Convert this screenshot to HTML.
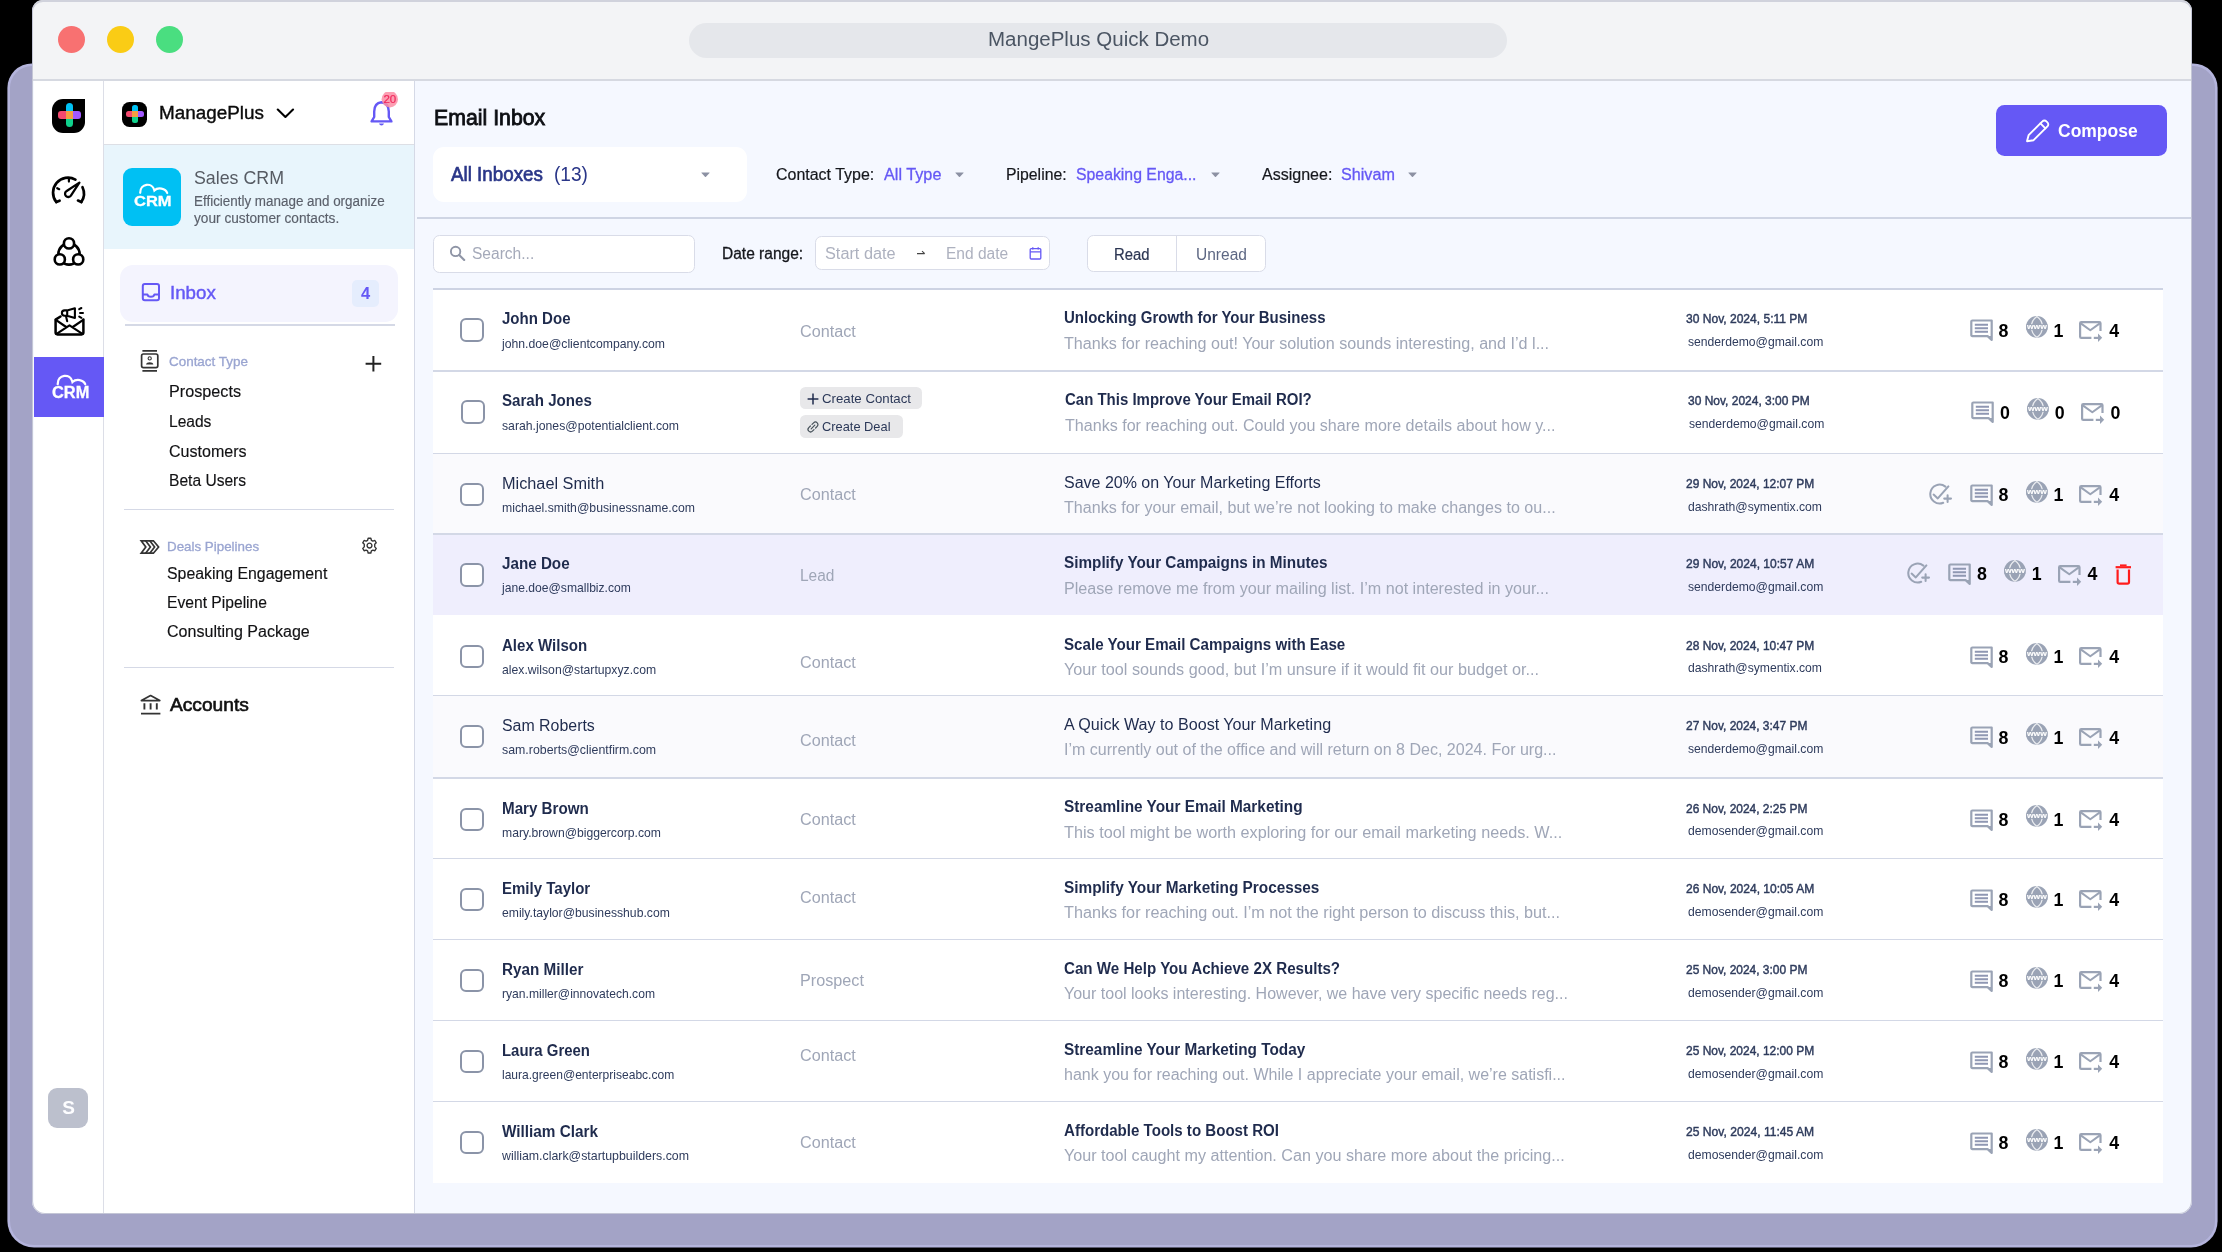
<!DOCTYPE html>
<html><head><meta charset="utf-8"><title>MangePlus Quick Demo</title>
<style>
html,body{margin:0;padding:0;}
body{width:2222px;height:1252px;background:#000;overflow:hidden;position:relative;font-family:"Liberation Sans", sans-serif;}
.b{position:absolute;display:block;}
.t{position:absolute;white-space:pre;line-height:1;font-family:"Liberation Sans", sans-serif;transform-origin:0 50%;}
#win{position:absolute;left:0;top:0;width:2222px;height:1252px;will-change:transform;clip-path:inset(0px 30px 38px 32px round 11px 11px 13px 13px);}
</style></head>
<body>
<div class="b" style="left:10.00px;top:66.00px;width:2204.50px;height:1178.50px;background:#a3a3c6;border-radius:22px 22px 24px 24px;box-shadow:0 0 0 2.6px #b4b4dc;"></div>
<div id="win">
<div class="b" style="left:32.00px;top:0.00px;width:2160.00px;height:1214.00px;background:#f5f8ff;"></div>
<div class="b" style="left:32.00px;top:0.00px;width:2160.00px;height:80.00px;background:#f3f4f6;"></div>
<div class="b" style="left:32.00px;top:79.30px;width:2160.00px;height:1.60px;background:#d6d9e1;"></div>
<div class="b" style="left:58.40px;top:26.30px;width:26.60px;height:26.60px;background:#f87171;border-radius:14px;"></div>
<div class="b" style="left:107.30px;top:26.30px;width:26.60px;height:26.60px;background:#facc15;border-radius:14px;"></div>
<div class="b" style="left:156.40px;top:26.30px;width:26.60px;height:26.60px;background:#4ade80;border-radius:14px;"></div>
<div class="b" style="left:689.00px;top:22.70px;width:818.00px;height:35.30px;background:#e5e7eb;border-radius:18px;"></div>
<span id="t0" class="t" style="left:987.80px;top:29.00px;font-size:20px;color:#4b5563;transform:scaleX(1.0252);">MangePlus Quick Demo</span>
<div class="b" style="left:34.00px;top:80.50px;width:69.50px;height:1134.00px;background:#ffffff;"></div>
<div class="b" style="left:103.00px;top:80.50px;width:1.40px;height:1134.00px;background:#dcdee7;"></div>
<div class="b" style="left:52.40px;top:99.00px;width:32.80px;height:33.60px;background:#000;border-radius:11px 0 11px 11px;"></div>
<div class="b" style="left:65.50px;top:103.00px;width:7.70px;height:8.60px;background:#00c2f5;border-radius:3.5px 3.5px 0 0;"></div>
<div class="b" style="left:65.50px;top:118.40px;width:7.70px;height:8.50px;background:#0fd28c;border-radius:0 0 3.5px 3.5px;"></div>
<div class="b" style="left:57.90px;top:111.00px;width:8.00px;height:7.60px;background:#f4496f;border-radius:3px 0 0 3px;"></div>
<div class="b" style="left:73.00px;top:111.00px;width:8.00px;height:7.60px;background:#a259ff;border-radius:0 3px 3px 0;"></div>
<div class="b" style="left:65.50px;top:111.00px;width:7.70px;height:7.60px;background:#f59e42;"></div>
<svg class="b" style="left:48.00px;top:172.00px;" width="42" height="36" viewBox="48 172 42 36">
<g fill="none" stroke="#000" stroke-width="2.7" stroke-linecap="round" stroke-linejoin="round">
<path d="M56.3 202 A15 15 0 0 1 75.4 179.6"/>
<path d="M82.5 187.2 A15 15 0 0 1 81.3 202"/>
<path d="M56.3 202 L59.6 200.7"/><path d="M81.3 202 L78 200.6"/>
<path d="M57.2 188.2 L59.2 189.2" stroke-width="2.2"/><path d="M68.9 178.8 L68.9 181.6" stroke-width="2.2"/>
<path d="M79.4 182.6 L66.7 191 A3.2 3.2 0 1 0 70.9 195.6 Z" stroke-width="2.3"/>
</g></svg>
<svg class="b" style="left:48.00px;top:232.00px;" width="42" height="40" viewBox="48 232 42 40">
<g fill="none" stroke="#000" stroke-width="2.6">
<circle cx="69" cy="254" r="10.6"/>
<circle cx="69" cy="243.4" r="5.1" fill="#fff"/>
<circle cx="59.8" cy="259.4" r="5.1" fill="#fff"/>
<circle cx="78.2" cy="259.4" r="5.1" fill="#fff"/>
</g></svg>
<svg class="b" style="left:48.00px;top:302.00px;" width="42" height="40" viewBox="48 302 42 40">
<g fill="none" stroke="#000" stroke-width="2.5" stroke-linecap="round" stroke-linejoin="round">
<path d="M60.5 316.5 L55.6 319.6 L55.6 332.6 Q55.6 334.4 57.4 334.4 L81.6 334.4 Q83.4 334.4 83.4 332.6 L83.4 319.6"/>
<path d="M55.8 319.8 L66.2 327 M83.2 319.8 L72.8 327 M56.6 333.8 L69.5 325.4 L82.4 333.8" stroke-width="2.2"/>
<path d="M74.9 308.2 L74.9 318 L67 315.8 L64.6 315.8 A2.7 2.7 0 0 1 64.6 310.4 L67 310.4 Z M67.2 310.6 L67.2 315.6 M66 316.2 L67.2 321.2" stroke-width="2.1"/>
<path d="M79.2 309.2 L81.4 308 M80 313 L83 313 M79.2 316.6 L81.4 317.8" stroke-width="2"/>
</g></svg>
<div class="b" style="left:34.00px;top:357.00px;width:69.50px;height:60.20px;background:#6558f5;"></div>
<svg class="b" style="left:48.00px;top:370.00px;" width="46" height="34" viewBox="48 370 46 34">
<path d="M57.7 384.2 C57.4 374.2 70.4 372.8 72.5 382 C76.2 378.4 83.6 379.6 85.2 384.2" fill="none" stroke="#fff" stroke-width="2.3" stroke-linecap="round"/></svg>
<span id="t1" class="t" style="left:51.80px;top:385.00px;font-size:16px;color:#fff;font-weight:700;-webkit-text-stroke:0.3px #fff;transform:scaleX(1.0237);">CRM</span>
<div class="b" style="left:48.40px;top:1087.80px;width:40.00px;height:40.60px;background:#bcc0cd;border-radius:9px;"></div>
<span id="t2" class="t" style="left:68.50px;top:1098.00px;font-size:19px;color:#fdfdff;font-weight:700;transform:translateX(-50%);">S</span>
<div class="b" style="left:104.40px;top:80.50px;width:310.00px;height:1134.00px;background:#ffffff;"></div>
<div class="b" style="left:414.00px;top:80.50px;width:1.40px;height:1134.00px;background:#d5d9e6;"></div>
<div class="b" style="left:122.30px;top:101.70px;width:25.00px;height:25.20px;background:#000;border-radius:7.5px;"></div>
<div class="b" style="left:132.10px;top:105.20px;width:5.60px;height:6.00px;background:#00c2f5;border-radius:2.5px 2.5px 0 0;"></div>
<div class="b" style="left:132.10px;top:117.20px;width:5.60px;height:6.00px;background:#0fd28c;border-radius:0 0 2.5px 2.5px;"></div>
<div class="b" style="left:126.00px;top:111.20px;width:6.20px;height:5.80px;background:#f4496f;border-radius:2.5px 0 0 2.5px;"></div>
<div class="b" style="left:137.60px;top:111.20px;width:6.20px;height:5.80px;background:#a259ff;border-radius:0 2.5px 2.5px 0;"></div>
<div class="b" style="left:132.10px;top:111.20px;width:5.60px;height:5.80px;background:#f59e42;"></div>
<span id="t3" class="t" style="left:159.40px;top:105.00px;font-size:17.6px;color:#0b0b0b;-webkit-text-stroke:0.35px #0b0b0b;transform:scaleX(1.0725);">ManagePlus</span>
<svg class="b" style="left:274.00px;top:105.00px;" width="24" height="18" viewBox="274 105 24 18"><path d="M277.8 109.6 L285.4 117 L293 109.6" fill="none" stroke="#000" stroke-width="2.1" stroke-linecap="round" stroke-linejoin="round"/></svg>
<svg class="b" style="left:366.00px;top:92.00px;" width="36" height="40" viewBox="366 92 36 40">
<path d="M381.4 102.2 C376 102.8 374.2 107.4 374.2 111.6 L374.2 117 L371.6 121.4 L391.4 121.4 L388.8 117 L388.8 111.6 C388.8 107.4 387 102.8 381.4 102.2 Z" fill="none" stroke="#6558f5" stroke-width="2.4" stroke-linejoin="round"/>
<path d="M379 123.6 A2.6 2.6 0 0 0 384 123.6 Z" fill="#6558f5"/>
<circle cx="389.8" cy="99.2" r="8.2" fill="#fb8da4" fill-opacity="0.85"/></svg>
<span id="t4" class="t" style="left:389.80px;top:94.00px;font-size:11.5px;color:#f0285c;-webkit-text-stroke:0.2px #f0285c;transform:translateX(-50%);">20</span>
<div class="b" style="left:104.40px;top:143.60px;width:310.00px;height:1.50px;background:#dddfe5;"></div>
<div class="b" style="left:104.40px;top:145.00px;width:309.80px;height:103.60px;background:#e8f5fc;"></div>
<div class="b" style="left:122.70px;top:168.20px;width:58.00px;height:57.60px;background:#00c0f3;border-radius:9px;"></div>
<svg class="b" style="left:128.00px;top:178.00px;" width="50" height="34" viewBox="128 178 50 34">
<path d="M140.2 192.8 C140 183.2 152.4 182 154.4 190.4 C157.8 187 165.6 188 167.2 193" fill="none" stroke="#fff" stroke-width="2.2" stroke-linecap="round"/></svg>
<span id="t5" class="t" style="left:133.60px;top:193.00px;font-size:15.4px;color:#fff;font-weight:700;-webkit-text-stroke:0.3px #fff;transform:scaleX(1.0724);">CRM</span>
<span id="t6" class="t" style="left:194.40px;top:169.00px;font-size:18.6px;color:#565b63;transform:scaleX(0.9571);">Sales CRM</span>
<span id="t7" class="t" style="left:194.40px;top:194.00px;font-size:14px;color:#5b606b;-webkit-text-stroke:0.15px #5b606b;transform:scaleX(0.9579);">Efficiently manage and organize</span>
<span id="t8" class="t" style="left:194.40px;top:211.00px;font-size:14px;color:#5b606b;-webkit-text-stroke:0.15px #5b606b;transform:scaleX(0.9770);">your customer contacts.</span>
<div class="b" style="left:119.80px;top:265.00px;width:278.00px;height:57.00px;background:#f4f4fe;border-radius:13px;"></div>
<svg class="b" style="left:139.00px;top:280.00px;" width="24" height="24" viewBox="139 280 24 24">
<g fill="none" stroke="#6558f5" stroke-width="2" stroke-linejoin="round">
<rect x="142.8" y="284" width="16.2" height="16.2" rx="2"/>
<path d="M143 294.4 L147.4 294.4 C148 297.6 153.8 297.6 154.4 294.4 L158.8 294.4"/>
</g></svg>
<span id="t9" class="t" style="left:170.40px;top:283.00px;font-size:19px;color:#6558f5;-webkit-text-stroke:0.45px #6558f5;transform:scaleX(0.9853);">Inbox</span>
<div class="b" style="left:351.90px;top:279.80px;width:27.00px;height:27.00px;background:#e5edfd;border-radius:5px;"></div>
<span id="t10" class="t" style="left:365.50px;top:285.00px;font-size:16.5px;color:#6558f5;font-weight:700;transform:translateX(-50%);">4</span>
<div class="b" style="left:125.20px;top:324.40px;width:270.00px;height:1.50px;background:#d5d9e6;"></div>
<svg class="b" style="left:138.00px;top:347.00px;" width="24" height="28" viewBox="138 347 24 28">
<g fill="none" stroke="#333" stroke-width="1.7">
<path d="M142.4 350.8 L157 350.8 M142.4 370.8 L157 370.8"/>
<rect x="141.6" y="354" width="16.2" height="13.6" rx="1.8"/>
<circle cx="149.7" cy="358.4" r="1.6" stroke-width="1.1"/>
<path d="M146 364.4 C146.4 361.4 153 361.4 153.4 364.4 Z" fill="#333" stroke="none"/>
</g></svg>
<span id="t11" class="t" style="left:169.10px;top:355.00px;font-size:13px;color:#9aa5d1;-webkit-text-stroke:0.3px #9aa5d1;transform:scaleX(1.0331);">Contact Type</span>
<svg class="b" style="left:363.00px;top:354.00px;" width="20" height="20" viewBox="363 354 20 20"><path d="M365.6 363.7 L381.2 363.7 M373.4 356 L373.4 371.5" stroke="#222" stroke-width="2" fill="none"/></svg>
<span id="t12" class="t" style="left:169.20px;top:384.00px;font-size:16px;color:#121214;-webkit-text-stroke:0.15px #121214;transform:scaleX(1.0121);">Prospects</span>
<span id="t13" class="t" style="left:169.20px;top:414.00px;font-size:16px;color:#121214;-webkit-text-stroke:0.15px #121214;transform:scaleX(0.9726);">Leads</span>
<span id="t14" class="t" style="left:169.20px;top:444.00px;font-size:16px;color:#121214;-webkit-text-stroke:0.15px #121214;transform:scaleX(1.0031);">Customers</span>
<span id="t15" class="t" style="left:169.20px;top:473.00px;font-size:16px;color:#121214;-webkit-text-stroke:0.15px #121214;transform:scaleX(0.9742);">Beta Users</span>
<div class="b" style="left:124.00px;top:508.60px;width:270.00px;height:1.50px;background:#d5d9e6;"></div>
<svg class="b" style="left:136.50px;top:537.20px;" width="26" height="20" viewBox="136 537 26 20">
<g fill="none" stroke="#333" stroke-width="1.7" stroke-linejoin="miter">
<path d="M140.2 540.8 L152.4 540.8 L157.6 547 L152.4 553.2 L140.2 553.2 L144.8 547 Z"/>
<path d="M144.6 540.8 L149.4 547 L144.6 553.2 M148.8 540.8 L153.6 547 L148.8 553.2"/>
</g></svg>
<span id="t16" class="t" style="left:167.20px;top:540.00px;font-size:13px;color:#9aa5d1;-webkit-text-stroke:0.3px #9aa5d1;transform:scaleX(1.0278);">Deals Pipelines</span>
<svg class="b" style="left:358.00px;top:534.00px;" width="24" height="24" viewBox="358 534 24 24">
<g transform="translate(369.5 545.6) scale(0.9)">
<path d="M-1.5 -8.2 L1.5 -8.2 L2.1 -5.9 L3.7 -5 L6 -5.7 L7.5 -3.1 L5.8 -1.4 L5.8 1.4 L7.5 3.1 L6 5.7 L3.7 5 L2.1 5.9 L1.5 8.2 L-1.5 8.2 L-2.1 5.9 L-3.7 5 L-6 5.7 L-7.5 3.1 L-5.8 1.4 L-5.8 -1.4 L-7.5 -3.1 L-6 -5.7 L-3.7 -5 L-2.1 -5.9 Z" fill="none" stroke="#333" stroke-width="1.5" stroke-linejoin="round"/>
<circle r="2.7" fill="none" stroke="#333" stroke-width="1.5"/></g></svg>
<span id="t17" class="t" style="left:167.20px;top:566.00px;font-size:16px;color:#121214;-webkit-text-stroke:0.15px #121214;transform:scaleX(0.9901);">Speaking Engagement</span>
<span id="t18" class="t" style="left:167.20px;top:595.00px;font-size:16px;color:#121214;-webkit-text-stroke:0.15px #121214;transform:scaleX(0.9775);">Event Pipeline</span>
<span id="t19" class="t" style="left:167.20px;top:624.00px;font-size:16px;color:#121214;-webkit-text-stroke:0.15px #121214;transform:scaleX(1.0034);">Consulting Package</span>
<div class="b" style="left:124.00px;top:666.80px;width:270.00px;height:1.50px;background:#d5d9e6;"></div>
<svg class="b" style="left:138.00px;top:692.00px;" width="26" height="26" viewBox="138 692 26 26">
<g fill="none" stroke="#333" stroke-width="1.7">
<path d="M141.4 700.6 L150.6 695.6 L159.8 700.6 Z" stroke-linejoin="round"/>
<path d="M144.4 703.2 L144.4 709.6 M150.6 703.2 L150.6 709.6 M156.8 703.2 L156.8 709.6 M141 713.6 L160.4 713.6" stroke-width="1.9"/>
</g></svg>
<span id="t20" class="t" style="left:170.10px;top:697.00px;font-size:17.6px;color:#111;-webkit-text-stroke:0.6px #111;transform:scaleX(1.0888);">Accounts</span>
<span id="t21" class="t" style="left:433.50px;top:107.00px;font-size:22px;color:#0d0f14;-webkit-text-stroke:0.85px #0d0f14;transform:scaleX(0.9674);">Email Inbox</span>
<div class="b" style="left:1996.30px;top:105.00px;width:170.80px;height:50.80px;background:#6558f5;border-radius:8.5px;"></div>
<svg class="b" style="left:2022.00px;top:115.00px;" width="32" height="32" viewBox="2022 115 32 32">
<g fill="none" stroke="#fff" stroke-width="1.9" stroke-linejoin="round" stroke-linecap="round">
<path d="M2027 141.2 L2028.6 135.2 L2042.4 121.4 A2.7 2.7 0 0 1 2046.4 121.4 L2047.4 122.4 A2.7 2.7 0 0 1 2047.4 126.4 L2033.6 140.2 Z"/>
<path d="M2040.4 123.4 L2045.4 128.4"/>
</g></svg>
<span id="t22" class="t" style="left:2057.60px;top:123.00px;font-size:17.6px;color:#fff;font-weight:700;transform:scaleX(0.9941);">Compose</span>
<div class="b" style="left:433.00px;top:147.00px;width:314.00px;height:55.00px;background:#ffffff;border-radius:11px;"></div>
<span id="t23" class="t" style="left:450.50px;top:164.00px;font-size:20px;color:#2a3688;-webkit-text-stroke:0.65px #2a3688;transform:scaleX(0.9393);">All Inboxes</span>
<span id="t24" class="t" style="left:554.00px;top:164.00px;font-size:20px;color:#2a3688;transform:scaleX(0.9528);">(13)</span>
<svg class="b" style="left:701.20px;top:172.40px;" width="9" height="5.4" viewBox="0 0 10.4 6"><path d="M0.9 0.4 L9.5 0.4 Q10.4 0.4 9.8 1.1 L5.8 5.3 Q5.2 5.9 4.6 5.3 L0.6 1.1 Q0 0.4 0.9 0.4 Z" fill="#8c91a3"/></svg>
<span id="t25" class="t" style="left:775.70px;top:167.00px;font-size:16px;color:#15171c;-webkit-text-stroke:0.2px #15171c;transform:scaleX(0.9976);">Contact Type:</span>
<span id="t26" class="t" style="left:883.50px;top:167.00px;font-size:16px;color:#6558f5;-webkit-text-stroke:0.3px #6558f5;transform:scaleX(1.0137);">All Type</span>
<svg class="b" style="left:955.00px;top:172.40px;" width="9" height="5.4" viewBox="0 0 10.4 6"><path d="M0.9 0.4 L9.5 0.4 Q10.4 0.4 9.8 1.1 L5.8 5.3 Q5.2 5.9 4.6 5.3 L0.6 1.1 Q0 0.4 0.9 0.4 Z" fill="#8c91a3"/></svg>
<span id="t27" class="t" style="left:1006.20px;top:167.00px;font-size:16px;color:#15171c;-webkit-text-stroke:0.2px #15171c;transform:scaleX(0.9874);">Pipeline:</span>
<span id="t28" class="t" style="left:1075.90px;top:167.00px;font-size:16px;color:#6558f5;-webkit-text-stroke:0.3px #6558f5;transform:scaleX(0.9887);">Speaking Enga...</span>
<svg class="b" style="left:1210.60px;top:172.40px;" width="9" height="5.4" viewBox="0 0 10.4 6"><path d="M0.9 0.4 L9.5 0.4 Q10.4 0.4 9.8 1.1 L5.8 5.3 Q5.2 5.9 4.6 5.3 L0.6 1.1 Q0 0.4 0.9 0.4 Z" fill="#8c91a3"/></svg>
<span id="t29" class="t" style="left:1262.00px;top:167.00px;font-size:16px;color:#15171c;-webkit-text-stroke:0.2px #15171c;transform:scaleX(1.0019);">Assignee:</span>
<span id="t30" class="t" style="left:1341.00px;top:167.00px;font-size:16px;color:#6558f5;-webkit-text-stroke:0.3px #6558f5;transform:scaleX(1.0101);">Shivam</span>
<svg class="b" style="left:1408.40px;top:172.40px;" width="9" height="5.4" viewBox="0 0 10.4 6"><path d="M0.9 0.4 L9.5 0.4 Q10.4 0.4 9.8 1.1 L5.8 5.3 Q5.2 5.9 4.6 5.3 L0.6 1.1 Q0 0.4 0.9 0.4 Z" fill="#8c91a3"/></svg>
<div class="b" style="left:416.80px;top:217.00px;width:1776.00px;height:1.50px;background:#cfd5e4;"></div>
<div class="b" style="left:433.00px;top:234.80px;width:262.20px;height:38.00px;background:#ffffff;border-radius:6.5px;border:1.3px solid #d9dce8;box-sizing:border-box;"></div>
<svg class="b" style="left:448.00px;top:244.00px;" width="20" height="20" viewBox="448 244 20 20"><circle cx="455.6" cy="251.4" r="4.7" fill="none" stroke="#8f95a6" stroke-width="1.9"/><path d="M459.2 255 L464.2 260" stroke="#8f95a6" stroke-width="2.1" stroke-linecap="round"/></svg>
<span id="t31" class="t" style="left:472.00px;top:246.00px;font-size:16px;color:#a4a9b9;transform:scaleX(0.9714);">Search...</span>
<span id="t32" class="t" style="left:722.00px;top:246.00px;font-size:16px;color:#15171c;-webkit-text-stroke:0.3px #15171c;transform:scaleX(0.9700);">Date range:</span>
<div class="b" style="left:814.60px;top:236.00px;width:235.20px;height:34.00px;background:#ffffff;border-radius:6.5px;border:1.3px solid #d9dce8;box-sizing:border-box;"></div>
<span id="t33" class="t" style="left:825.00px;top:246.00px;font-size:16px;color:#adb1bf;transform:scaleX(1.0177);">Start date</span>
<svg class="b" style="left:915.00px;top:248.00px;" width="14" height="10" viewBox="915 248 14 10"><path d="M917 253.6 L924.6 253.6 M922 251.2 L924.8 253.6" stroke="#444" stroke-width="1.1" fill="none"/></svg>
<span id="t34" class="t" style="left:945.50px;top:246.00px;font-size:16px;color:#adb1bf;transform:scaleX(0.9709);">End date</span>
<svg class="b" style="left:1028.00px;top:246.00px;" width="16" height="16" viewBox="1028 246 16 16"><g fill="none" stroke="#6558f5" stroke-width="1.3">
<rect x="1030.2" y="248.6" width="10.6" height="10.4" rx="1"/><path d="M1030.2 251.8 L1040.8 251.8 M1032.8 247.2 L1032.8 249.6 M1038.2 247.2 L1038.2 249.6"/></g></svg>
<div class="b" style="left:1087.20px;top:235.20px;width:179.20px;height:37.20px;background:#ffffff;border-radius:6.5px;border:1.3px solid #d9dce8;box-sizing:border-box;"></div>
<div class="b" style="left:1175.70px;top:235.80px;width:1.30px;height:36.00px;background:#d9dce8;"></div>
<span id="t35" class="t" style="left:1114.20px;top:247.00px;font-size:16px;color:#2b3552;-webkit-text-stroke:0.2px #2b3552;transform:scaleX(0.9281);">Read</span>
<span id="t36" class="t" style="left:1196.00px;top:247.00px;font-size:16px;color:#5d6783;transform:scaleX(0.9698);">Unread</span>
<div class="b" style="left:432.70px;top:288.80px;width:1730.70px;height:894.00px;background:#ffffff;"></div>
<div class="b" style="left:460.10px;top:318.20px;width:23.80px;height:23.60px;background:#ffffff;border-radius:6px;border:2.2px solid #8b94a8;box-sizing:border-box;"></div>
<span id="t37" class="t" style="left:501.90px;top:311.00px;font-size:16px;color:#1f2b4d;font-weight:700;transform:scaleX(0.9398);">John Doe</span>
<span id="t38" class="t" style="left:501.90px;top:338.00px;font-size:12.8px;color:#2e3b5c;transform:scaleX(0.9550);">john.doe@clientcompany.com</span>
<span id="t39" class="t" style="left:799.60px;top:324.00px;font-size:16px;color:#9fa6b7;transform:scaleX(1.0120);">Contact</span>
<span id="t40" class="t" style="left:1063.80px;top:310.00px;font-size:16px;color:#1f2b4d;font-weight:700;transform:scaleX(0.9388);">Unlocking Growth for Your Business</span>
<span id="t41" class="t" style="left:1063.80px;top:336.00px;font-size:16px;color:#9fa6b7;transform:scaleX(1.0081);">Thanks for reaching out! Your solution sounds interesting, and I’d l...</span>
<span id="t42" class="t" style="left:1686.40px;top:312.00px;font-size:13px;color:#2e3b5c;-webkit-text-stroke:0.45px #2e3b5c;transform:scaleX(0.9264);">30 Nov, 2024, 5:11 PM</span>
<span id="t43" class="t" style="left:1687.70px;top:336.00px;font-size:12.8px;color:#2e3b5c;transform:scaleX(0.9498);">senderdemo@gmail.com</span>
<svg class="b" style="left:1970.00px;top:319.20px;" width="24" height="23" viewBox="0 0 24 23">
<path d="M2.4 1.5 L21.7 1.5 L21.7 21 L17.6 17.1 L2.4 17.1 Q1.3 17.1 1.3 16 L1.3 2.6 Q1.3 1.5 2.4 1.5 Z" fill="none" stroke="#9aa3b5" stroke-width="2.2" stroke-linejoin="round"/>
<path d="M17.8 17 L21.8 20.8 L21.8 17 Z" fill="#9aa3b5"/>
<path d="M4.8 5.7 L18 5.7 M4.8 9.3 L18 9.3 M4.8 12.7 L18 12.7" stroke="#8f97b2" stroke-width="1.9" fill="none"/></svg>
<span id="t44" class="t" style="left:1998.60px;top:323.00px;font-size:17.8px;color:#000;font-weight:700;">8</span>
<svg class="b" style="left:2025.60px;top:316.10px;" width="22" height="22" viewBox="0 0 22 22">
<circle cx="10.9" cy="10.9" r="10.85" fill="#9aa3b5"/>
<path d="M10.9 0.6 C3.6 5.4 3.6 16.4 10.9 21.2 M10.9 0.6 C18.2 5.4 18.2 16.4 10.9 21.2" fill="none" stroke="#fff" stroke-opacity="0.8" stroke-width="1.25" />
<rect x="0.4" y="8.2" width="21" height="5.6" fill="#9aa3b5"/>
<text x="10.9" y="13.1" font-family='"Liberation Sans",sans-serif' font-size="7.6" font-weight="700" fill="#fff" stroke="#fff" stroke-width="0.12" text-anchor="middle" textLength="19.8" lengthAdjust="spacingAndGlyphs">www</text></svg>
<span id="t45" class="t" style="left:2053.40px;top:323.00px;font-size:17.8px;color:#000;font-weight:700;">1</span>
<svg class="b" style="left:2079.40px;top:320.90px;" width="25" height="22" viewBox="0 0 25 22">
<g fill="none" stroke="#9aa3b5" stroke-width="2.2" stroke-linejoin="round">
<path d="M12.4 16.9 L2.3 16.9 Q1.1 16.9 1.1 15.7 L1.1 2.3 Q1.1 1.1 2.3 1.1 L20.3 1.1 Q21.5 1.1 21.5 2.3 L21.5 9.9"/>
<path d="M1.8 2.4 L11.3 9.3 L20.8 2.4" stroke-width="2"/>
<path d="M14.8 16.9 L19.6 16.9"/>
</g><path d="M19 12.6 L23.2 16.8 L19 21 Z" fill="#9aa3b5"/></svg>
<span id="t46" class="t" style="left:2109.20px;top:323.00px;font-size:17.8px;color:#000;font-weight:700;">4</span>
<div class="b" style="left:461.08px;top:400.20px;width:23.80px;height:23.60px;background:#ffffff;border-radius:6px;border:2.2px solid #8b94a8;box-sizing:border-box;"></div>
<span id="t47" class="t" style="left:501.90px;top:393.00px;font-size:16px;color:#1f2b4d;font-weight:700;transform:scaleX(0.9437);">Sarah Jones</span>
<span id="t48" class="t" style="left:501.90px;top:420.00px;font-size:12.8px;color:#2e3b5c;transform:scaleX(0.9560);">sarah.jones@potentialclient.com</span>
<div class="b" style="left:799.50px;top:386.50px;width:122.30px;height:22.60px;background:#e8e8ea;border-radius:5.5px;"></div>
<svg class="b" style="left:805.50px;top:391.50px;" width="14" height="14" viewBox="0 0 14 14"><path d="M1.6 7 L12.4 7 M7 1.6 L7 12.4" stroke="#1f2b4d" stroke-width="1.5" fill="none"/></svg>
<span id="t49" class="t" style="left:822.10px;top:392.00px;font-size:13.2px;color:#2b3858;transform:scaleX(1.0033);">Create Contact</span>
<div class="b" style="left:799.50px;top:414.80px;width:103.40px;height:23.00px;background:#e8e8ea;border-radius:5.5px;"></div>
<svg class="b" style="left:805.50px;top:419.70px;" width="14" height="14" viewBox="0 0 14 14"><g fill="none" stroke="#46515a" stroke-width="1.2" stroke-linecap="round">
<path d="M6 4.4 L7.6 2.8 A2.5 2.5 0 0 1 11.2 6.4 L9.6 8"/><path d="M8 9.6 L6.4 11.2 A2.5 2.5 0 0 1 2.8 7.6 L4.4 6"/><path d="M5.2 8.8 L8.8 5.2"/></g></svg>
<span id="t50" class="t" style="left:822.10px;top:420.00px;font-size:13.2px;color:#2b3858;transform:scaleX(0.9734);">Create Deal</span>
<span id="t51" class="t" style="left:1065.20px;top:392.00px;font-size:16px;color:#1f2b4d;font-weight:700;transform:scaleX(0.9364);">Can This Improve Your Email ROI?</span>
<span id="t52" class="t" style="left:1065.20px;top:418.00px;font-size:16px;color:#9fa6b7;transform:scaleX(1.0052);">Thanks for reaching out. Could you share more details about how y...</span>
<span id="t53" class="t" style="left:1687.80px;top:394.00px;font-size:13px;color:#2e3b5c;-webkit-text-stroke:0.45px #2e3b5c;transform:scaleX(0.9219);">30 Nov, 2024, 3:00 PM</span>
<span id="t54" class="t" style="left:1689.10px;top:418.00px;font-size:12.8px;color:#2e3b5c;transform:scaleX(0.9498);">senderdemo@gmail.com</span>
<svg class="b" style="left:1971.40px;top:401.20px;" width="24" height="23" viewBox="0 0 24 23">
<path d="M2.4 1.5 L21.7 1.5 L21.7 21 L17.6 17.1 L2.4 17.1 Q1.3 17.1 1.3 16 L1.3 2.6 Q1.3 1.5 2.4 1.5 Z" fill="none" stroke="#9aa3b5" stroke-width="2.2" stroke-linejoin="round"/>
<path d="M17.8 17 L21.8 20.8 L21.8 17 Z" fill="#9aa3b5"/>
<path d="M4.8 5.7 L18 5.7 M4.8 9.3 L18 9.3 M4.8 12.7 L18 12.7" stroke="#8f97b2" stroke-width="1.9" fill="none"/></svg>
<span id="t55" class="t" style="left:2000.00px;top:405.00px;font-size:17.8px;color:#000;font-weight:700;">0</span>
<svg class="b" style="left:2027.00px;top:398.10px;" width="22" height="22" viewBox="0 0 22 22">
<circle cx="10.9" cy="10.9" r="10.85" fill="#9aa3b5"/>
<path d="M10.9 0.6 C3.6 5.4 3.6 16.4 10.9 21.2 M10.9 0.6 C18.2 5.4 18.2 16.4 10.9 21.2" fill="none" stroke="#fff" stroke-opacity="0.8" stroke-width="1.25" />
<rect x="0.4" y="8.2" width="21" height="5.6" fill="#9aa3b5"/>
<text x="10.9" y="13.1" font-family='"Liberation Sans",sans-serif' font-size="7.6" font-weight="700" fill="#fff" stroke="#fff" stroke-width="0.12" text-anchor="middle" textLength="19.8" lengthAdjust="spacingAndGlyphs">www</text></svg>
<span id="t56" class="t" style="left:2054.80px;top:405.00px;font-size:17.8px;color:#000;font-weight:700;">0</span>
<svg class="b" style="left:2080.80px;top:402.90px;" width="25" height="22" viewBox="0 0 25 22">
<g fill="none" stroke="#9aa3b5" stroke-width="2.2" stroke-linejoin="round">
<path d="M12.4 16.9 L2.3 16.9 Q1.1 16.9 1.1 15.7 L1.1 2.3 Q1.1 1.1 2.3 1.1 L20.3 1.1 Q21.5 1.1 21.5 2.3 L21.5 9.9"/>
<path d="M1.8 2.4 L11.3 9.3 L20.8 2.4" stroke-width="2"/>
<path d="M14.8 16.9 L19.6 16.9"/>
</g><path d="M19 12.6 L23.2 16.8 L19 21 Z" fill="#9aa3b5"/></svg>
<span id="t57" class="t" style="left:2110.60px;top:405.00px;font-size:17.8px;color:#000;font-weight:700;">0</span>
<div class="b" style="left:432.70px;top:453.30px;width:1730.70px;height:80.50px;background:#fafafd;"></div>
<div class="b" style="left:460.10px;top:482.70px;width:23.80px;height:23.60px;background:#ffffff;border-radius:6px;border:2.2px solid #8b94a8;box-sizing:border-box;"></div>
<span id="t58" class="t" style="left:501.90px;top:476.00px;font-size:16px;color:#1f2b4d;transform:scaleX(1.0171);">Michael Smith</span>
<span id="t59" class="t" style="left:501.90px;top:502.00px;font-size:12.8px;color:#2e3b5c;transform:scaleX(0.9575);">michael.smith@businessname.com</span>
<span id="t60" class="t" style="left:799.60px;top:487.00px;font-size:16px;color:#9fa6b7;transform:scaleX(1.0120);">Contact</span>
<span id="t61" class="t" style="left:1063.80px;top:475.00px;font-size:16px;color:#1f2b4d;transform:scaleX(0.9998);">Save 20% on Your Marketing Efforts</span>
<span id="t62" class="t" style="left:1063.80px;top:500.00px;font-size:16px;color:#9fa6b7;transform:scaleX(1.0050);">Thanks for your email, but we’re not looking to make changes to ou...</span>
<span id="t63" class="t" style="left:1686.40px;top:477.00px;font-size:13px;color:#2e3b5c;-webkit-text-stroke:0.45px #2e3b5c;transform:scaleX(0.9206);">29 Nov, 2024, 12:07 PM</span>
<span id="t64" class="t" style="left:1687.70px;top:501.00px;font-size:12.8px;color:#2e3b5c;transform:scaleX(0.9502);">dashrath@symentix.com</span>
<svg class="b" style="left:1970.00px;top:483.70px;" width="24" height="23" viewBox="0 0 24 23">
<path d="M2.4 1.5 L21.7 1.5 L21.7 21 L17.6 17.1 L2.4 17.1 Q1.3 17.1 1.3 16 L1.3 2.6 Q1.3 1.5 2.4 1.5 Z" fill="none" stroke="#9aa3b5" stroke-width="2.2" stroke-linejoin="round"/>
<path d="M17.8 17 L21.8 20.8 L21.8 17 Z" fill="#9aa3b5"/>
<path d="M4.8 5.7 L18 5.7 M4.8 9.3 L18 9.3 M4.8 12.7 L18 12.7" stroke="#8f97b2" stroke-width="1.9" fill="none"/></svg>
<span id="t65" class="t" style="left:1998.60px;top:487.00px;font-size:17.8px;color:#000;font-weight:700;">8</span>
<svg class="b" style="left:2025.60px;top:480.60px;" width="22" height="22" viewBox="0 0 22 22">
<circle cx="10.9" cy="10.9" r="10.85" fill="#9aa3b5"/>
<path d="M10.9 0.6 C3.6 5.4 3.6 16.4 10.9 21.2 M10.9 0.6 C18.2 5.4 18.2 16.4 10.9 21.2" fill="none" stroke="#fff" stroke-opacity="0.8" stroke-width="1.25" />
<rect x="0.4" y="8.2" width="21" height="5.6" fill="#9aa3b5"/>
<text x="10.9" y="13.1" font-family='"Liberation Sans",sans-serif' font-size="7.6" font-weight="700" fill="#fff" stroke="#fff" stroke-width="0.12" text-anchor="middle" textLength="19.8" lengthAdjust="spacingAndGlyphs">www</text></svg>
<span id="t66" class="t" style="left:2053.40px;top:487.00px;font-size:17.8px;color:#000;font-weight:700;">1</span>
<svg class="b" style="left:2079.40px;top:485.40px;" width="25" height="22" viewBox="0 0 25 22">
<g fill="none" stroke="#9aa3b5" stroke-width="2.2" stroke-linejoin="round">
<path d="M12.4 16.9 L2.3 16.9 Q1.1 16.9 1.1 15.7 L1.1 2.3 Q1.1 1.1 2.3 1.1 L20.3 1.1 Q21.5 1.1 21.5 2.3 L21.5 9.9"/>
<path d="M1.8 2.4 L11.3 9.3 L20.8 2.4" stroke-width="2"/>
<path d="M14.8 16.9 L19.6 16.9"/>
</g><path d="M19 12.6 L23.2 16.8 L19 21 Z" fill="#9aa3b5"/></svg>
<span id="t67" class="t" style="left:2109.20px;top:487.00px;font-size:17.8px;color:#000;font-weight:700;">4</span>
<svg class="b" style="left:1927.60px;top:482.60px;" width="25" height="23" viewBox="0 0 25 23">
<g fill="none" stroke="#9aa3b5" stroke-width="2.05" stroke-linecap="round" stroke-linejoin="round">
<path d="M17.4 3.6 A9.4 9.4 0 1 0 15.2 19.8"/>
<path d="M5.6 11.6 L9.8 15.4 L20.4 3.4"/>
<path d="M16.2 15.6 L23 15.6 M19.6 12.2 L19.6 19"/>
</g></svg>
<div class="b" style="left:432.70px;top:533.80px;width:1730.70px;height:81.40px;background:#efeefd;"></div>
<div class="b" style="left:460.10px;top:563.20px;width:23.80px;height:23.60px;background:#ffffff;border-radius:6px;border:2.2px solid #8b94a8;box-sizing:border-box;"></div>
<span id="t68" class="t" style="left:501.90px;top:556.00px;font-size:16px;color:#1f2b4d;font-weight:700;transform:scaleX(0.9502);">Jane Doe</span>
<span id="t69" class="t" style="left:501.90px;top:582.00px;font-size:12.8px;color:#2e3b5c;transform:scaleX(0.9475);">jane.doe@smallbiz.com</span>
<span id="t70" class="t" style="left:799.60px;top:568.00px;font-size:16px;color:#9fa6b7;transform:scaleX(0.9665);">Lead</span>
<span id="t71" class="t" style="left:1063.80px;top:555.00px;font-size:16px;color:#1f2b4d;font-weight:700;transform:scaleX(0.9555);">Simplify Your Campaigns in Minutes</span>
<span id="t72" class="t" style="left:1063.80px;top:581.00px;font-size:16px;color:#9fa6b7;transform:scaleX(1.0079);">Please remove me from your mailing list. I’m not interested in your...</span>
<span id="t73" class="t" style="left:1686.40px;top:557.00px;font-size:13px;color:#2e3b5c;-webkit-text-stroke:0.45px #2e3b5c;transform:scaleX(0.9254);">29 Nov, 2024, 10:57 AM</span>
<span id="t74" class="t" style="left:1687.70px;top:581.00px;font-size:12.8px;color:#2e3b5c;transform:scaleX(0.9498);">senderdemo@gmail.com</span>
<svg class="b" style="left:1948.30px;top:562.80px;" width="24" height="23" viewBox="0 0 24 23">
<path d="M2.4 1.5 L21.7 1.5 L21.7 21 L17.6 17.1 L2.4 17.1 Q1.3 17.1 1.3 16 L1.3 2.6 Q1.3 1.5 2.4 1.5 Z" fill="none" stroke="#9aa3b5" stroke-width="2.2" stroke-linejoin="round"/>
<path d="M17.8 17 L21.8 20.8 L21.8 17 Z" fill="#9aa3b5"/>
<path d="M4.8 5.7 L18 5.7 M4.8 9.3 L18 9.3 M4.8 12.7 L18 12.7" stroke="#8f97b2" stroke-width="1.9" fill="none"/></svg>
<span id="t75" class="t" style="left:1976.90px;top:566.00px;font-size:17.8px;color:#000;font-weight:700;">8</span>
<svg class="b" style="left:2003.90px;top:559.70px;" width="22" height="22" viewBox="0 0 22 22">
<circle cx="10.9" cy="10.9" r="10.85" fill="#9aa3b5"/>
<path d="M10.9 0.6 C3.6 5.4 3.6 16.4 10.9 21.2 M10.9 0.6 C18.2 5.4 18.2 16.4 10.9 21.2" fill="none" stroke="#fff" stroke-opacity="0.8" stroke-width="1.25" />
<rect x="0.4" y="8.2" width="21" height="5.6" fill="#9aa3b5"/>
<text x="10.9" y="13.1" font-family='"Liberation Sans",sans-serif' font-size="7.6" font-weight="700" fill="#fff" stroke="#fff" stroke-width="0.12" text-anchor="middle" textLength="19.8" lengthAdjust="spacingAndGlyphs">www</text></svg>
<span id="t76" class="t" style="left:2031.70px;top:566.00px;font-size:17.8px;color:#000;font-weight:700;">1</span>
<svg class="b" style="left:2057.70px;top:564.50px;" width="25" height="22" viewBox="0 0 25 22">
<g fill="none" stroke="#9aa3b5" stroke-width="2.2" stroke-linejoin="round">
<path d="M12.4 16.9 L2.3 16.9 Q1.1 16.9 1.1 15.7 L1.1 2.3 Q1.1 1.1 2.3 1.1 L20.3 1.1 Q21.5 1.1 21.5 2.3 L21.5 9.9"/>
<path d="M1.8 2.4 L11.3 9.3 L20.8 2.4" stroke-width="2"/>
<path d="M14.8 16.9 L19.6 16.9"/>
</g><path d="M19 12.6 L23.2 16.8 L19 21 Z" fill="#9aa3b5"/></svg>
<span id="t77" class="t" style="left:2087.50px;top:566.00px;font-size:17.8px;color:#000;font-weight:700;">4</span>
<svg class="b" style="left:1906.40px;top:562.00px;" width="25" height="23" viewBox="0 0 25 23">
<g fill="none" stroke="#9aa3b5" stroke-width="2.05" stroke-linecap="round" stroke-linejoin="round">
<path d="M17.4 3.6 A9.4 9.4 0 1 0 15.2 19.8"/>
<path d="M5.6 11.6 L9.8 15.4 L20.4 3.4"/>
<path d="M16.2 15.6 L23 15.6 M19.6 12.2 L19.6 19"/>
</g></svg>
<svg class="b" style="left:2115.40px;top:564.20px;" width="17" height="21" viewBox="0 0 17 21">
<g fill="none" stroke="#ff1c1c" stroke-width="2.2" stroke-linejoin="round">
<path d="M0.6 3.2 L16 3.2"/><path d="M5 1.2 L11.6 1.2" stroke-width="1.6"/>
<path d="M2.6 5.4 L2.6 18 Q2.6 19.6 4.2 19.6 L12.4 19.6 Q14 19.6 14 18 L14 5.4"/>
</g></svg>
<div class="b" style="left:460.10px;top:644.60px;width:23.80px;height:23.60px;background:#ffffff;border-radius:6px;border:2.2px solid #8b94a8;box-sizing:border-box;"></div>
<span id="t78" class="t" style="left:501.90px;top:638.00px;font-size:16px;color:#1f2b4d;font-weight:700;transform:scaleX(0.9409);">Alex Wilson</span>
<span id="t79" class="t" style="left:501.90px;top:664.00px;font-size:12.8px;color:#2e3b5c;transform:scaleX(0.9533);">alex.wilson@startupxyz.com</span>
<span id="t80" class="t" style="left:799.60px;top:655.00px;font-size:16px;color:#9fa6b7;transform:scaleX(1.0120);">Contact</span>
<span id="t81" class="t" style="left:1063.80px;top:637.00px;font-size:16px;color:#1f2b4d;font-weight:700;transform:scaleX(0.9459);">Scale Your Email Campaigns with Ease</span>
<span id="t82" class="t" style="left:1063.80px;top:662.00px;font-size:16px;color:#9fa6b7;transform:scaleX(1.0129);">Your tool sounds good, but I’m unsure if it would fit our budget or...</span>
<span id="t83" class="t" style="left:1686.40px;top:639.00px;font-size:13px;color:#2e3b5c;-webkit-text-stroke:0.45px #2e3b5c;transform:scaleX(0.9206);">28 Nov, 2024, 10:47 PM</span>
<span id="t84" class="t" style="left:1687.70px;top:662.00px;font-size:12.8px;color:#2e3b5c;transform:scaleX(0.9502);">dashrath@symentix.com</span>
<svg class="b" style="left:1970.00px;top:645.60px;" width="24" height="23" viewBox="0 0 24 23">
<path d="M2.4 1.5 L21.7 1.5 L21.7 21 L17.6 17.1 L2.4 17.1 Q1.3 17.1 1.3 16 L1.3 2.6 Q1.3 1.5 2.4 1.5 Z" fill="none" stroke="#9aa3b5" stroke-width="2.2" stroke-linejoin="round"/>
<path d="M17.8 17 L21.8 20.8 L21.8 17 Z" fill="#9aa3b5"/>
<path d="M4.8 5.7 L18 5.7 M4.8 9.3 L18 9.3 M4.8 12.7 L18 12.7" stroke="#8f97b2" stroke-width="1.9" fill="none"/></svg>
<span id="t85" class="t" style="left:1998.60px;top:649.00px;font-size:17.8px;color:#000;font-weight:700;">8</span>
<svg class="b" style="left:2025.60px;top:642.50px;" width="22" height="22" viewBox="0 0 22 22">
<circle cx="10.9" cy="10.9" r="10.85" fill="#9aa3b5"/>
<path d="M10.9 0.6 C3.6 5.4 3.6 16.4 10.9 21.2 M10.9 0.6 C18.2 5.4 18.2 16.4 10.9 21.2" fill="none" stroke="#fff" stroke-opacity="0.8" stroke-width="1.25" />
<rect x="0.4" y="8.2" width="21" height="5.6" fill="#9aa3b5"/>
<text x="10.9" y="13.1" font-family='"Liberation Sans",sans-serif' font-size="7.6" font-weight="700" fill="#fff" stroke="#fff" stroke-width="0.12" text-anchor="middle" textLength="19.8" lengthAdjust="spacingAndGlyphs">www</text></svg>
<span id="t86" class="t" style="left:2053.40px;top:649.00px;font-size:17.8px;color:#000;font-weight:700;">1</span>
<svg class="b" style="left:2079.40px;top:647.30px;" width="25" height="22" viewBox="0 0 25 22">
<g fill="none" stroke="#9aa3b5" stroke-width="2.2" stroke-linejoin="round">
<path d="M12.4 16.9 L2.3 16.9 Q1.1 16.9 1.1 15.7 L1.1 2.3 Q1.1 1.1 2.3 1.1 L20.3 1.1 Q21.5 1.1 21.5 2.3 L21.5 9.9"/>
<path d="M1.8 2.4 L11.3 9.3 L20.8 2.4" stroke-width="2"/>
<path d="M14.8 16.9 L19.6 16.9"/>
</g><path d="M19 12.6 L23.2 16.8 L19 21 Z" fill="#9aa3b5"/></svg>
<span id="t87" class="t" style="left:2109.20px;top:649.00px;font-size:17.8px;color:#000;font-weight:700;">4</span>
<div class="b" style="left:432.70px;top:695.50px;width:1730.70px;height:82.60px;background:#fafafd;"></div>
<div class="b" style="left:460.10px;top:724.90px;width:23.80px;height:23.60px;background:#ffffff;border-radius:6px;border:2.2px solid #8b94a8;box-sizing:border-box;"></div>
<span id="t88" class="t" style="left:501.90px;top:718.00px;font-size:16px;color:#1f2b4d;transform:scaleX(0.9938);">Sam Roberts</span>
<span id="t89" class="t" style="left:501.90px;top:744.00px;font-size:12.8px;color:#2e3b5c;transform:scaleX(0.9662);">sam.roberts@clientfirm.com</span>
<span id="t90" class="t" style="left:799.60px;top:733.00px;font-size:16px;color:#9fa6b7;transform:scaleX(1.0120);">Contact</span>
<span id="t91" class="t" style="left:1063.80px;top:717.00px;font-size:16px;color:#1f2b4d;transform:scaleX(1.0067);">A Quick Way to Boost Your Marketing</span>
<span id="t92" class="t" style="left:1063.80px;top:742.00px;font-size:16px;color:#9fa6b7;transform:scaleX(1.0020);">I’m currently out of the office and will return on 8 Dec, 2024. For urg...</span>
<span id="t93" class="t" style="left:1686.40px;top:719.00px;font-size:13px;color:#2e3b5c;-webkit-text-stroke:0.45px #2e3b5c;transform:scaleX(0.9196);">27 Nov, 2024, 3:47 PM</span>
<span id="t94" class="t" style="left:1687.70px;top:743.00px;font-size:12.8px;color:#2e3b5c;transform:scaleX(0.9498);">senderdemo@gmail.com</span>
<svg class="b" style="left:1970.00px;top:725.90px;" width="24" height="23" viewBox="0 0 24 23">
<path d="M2.4 1.5 L21.7 1.5 L21.7 21 L17.6 17.1 L2.4 17.1 Q1.3 17.1 1.3 16 L1.3 2.6 Q1.3 1.5 2.4 1.5 Z" fill="none" stroke="#9aa3b5" stroke-width="2.2" stroke-linejoin="round"/>
<path d="M17.8 17 L21.8 20.8 L21.8 17 Z" fill="#9aa3b5"/>
<path d="M4.8 5.7 L18 5.7 M4.8 9.3 L18 9.3 M4.8 12.7 L18 12.7" stroke="#8f97b2" stroke-width="1.9" fill="none"/></svg>
<span id="t95" class="t" style="left:1998.60px;top:730.00px;font-size:17.8px;color:#000;font-weight:700;">8</span>
<svg class="b" style="left:2025.60px;top:722.80px;" width="22" height="22" viewBox="0 0 22 22">
<circle cx="10.9" cy="10.9" r="10.85" fill="#9aa3b5"/>
<path d="M10.9 0.6 C3.6 5.4 3.6 16.4 10.9 21.2 M10.9 0.6 C18.2 5.4 18.2 16.4 10.9 21.2" fill="none" stroke="#fff" stroke-opacity="0.8" stroke-width="1.25" />
<rect x="0.4" y="8.2" width="21" height="5.6" fill="#9aa3b5"/>
<text x="10.9" y="13.1" font-family='"Liberation Sans",sans-serif' font-size="7.6" font-weight="700" fill="#fff" stroke="#fff" stroke-width="0.12" text-anchor="middle" textLength="19.8" lengthAdjust="spacingAndGlyphs">www</text></svg>
<span id="t96" class="t" style="left:2053.40px;top:730.00px;font-size:17.8px;color:#000;font-weight:700;">1</span>
<svg class="b" style="left:2079.40px;top:727.60px;" width="25" height="22" viewBox="0 0 25 22">
<g fill="none" stroke="#9aa3b5" stroke-width="2.2" stroke-linejoin="round">
<path d="M12.4 16.9 L2.3 16.9 Q1.1 16.9 1.1 15.7 L1.1 2.3 Q1.1 1.1 2.3 1.1 L20.3 1.1 Q21.5 1.1 21.5 2.3 L21.5 9.9"/>
<path d="M1.8 2.4 L11.3 9.3 L20.8 2.4" stroke-width="2"/>
<path d="M14.8 16.9 L19.6 16.9"/>
</g><path d="M19 12.6 L23.2 16.8 L19 21 Z" fill="#9aa3b5"/></svg>
<span id="t97" class="t" style="left:2109.20px;top:730.00px;font-size:17.8px;color:#000;font-weight:700;">4</span>
<div class="b" style="left:460.10px;top:807.50px;width:23.80px;height:23.60px;background:#ffffff;border-radius:6px;border:2.2px solid #8b94a8;box-sizing:border-box;"></div>
<span id="t98" class="t" style="left:501.90px;top:801.00px;font-size:16px;color:#1f2b4d;font-weight:700;transform:scaleX(0.9478);">Mary Brown</span>
<span id="t99" class="t" style="left:501.90px;top:827.00px;font-size:12.8px;color:#2e3b5c;transform:scaleX(0.9510);">mary.brown@biggercorp.com</span>
<span id="t100" class="t" style="left:799.60px;top:812.00px;font-size:16px;color:#9fa6b7;transform:scaleX(1.0120);">Contact</span>
<span id="t101" class="t" style="left:1063.80px;top:799.00px;font-size:16px;color:#1f2b4d;font-weight:700;transform:scaleX(0.9606);">Streamline Your Email Marketing</span>
<span id="t102" class="t" style="left:1063.80px;top:825.00px;font-size:16px;color:#9fa6b7;transform:scaleX(1.0131);">This tool might be worth exploring for our email marketing needs. W...</span>
<span id="t103" class="t" style="left:1686.40px;top:802.00px;font-size:13px;color:#2e3b5c;-webkit-text-stroke:0.45px #2e3b5c;transform:scaleX(0.9196);">26 Nov, 2024, 2:25 PM</span>
<span id="t104" class="t" style="left:1687.70px;top:825.00px;font-size:12.8px;color:#2e3b5c;transform:scaleX(0.9498);">demosender@gmail.com</span>
<svg class="b" style="left:1970.00px;top:808.50px;" width="24" height="23" viewBox="0 0 24 23">
<path d="M2.4 1.5 L21.7 1.5 L21.7 21 L17.6 17.1 L2.4 17.1 Q1.3 17.1 1.3 16 L1.3 2.6 Q1.3 1.5 2.4 1.5 Z" fill="none" stroke="#9aa3b5" stroke-width="2.2" stroke-linejoin="round"/>
<path d="M17.8 17 L21.8 20.8 L21.8 17 Z" fill="#9aa3b5"/>
<path d="M4.8 5.7 L18 5.7 M4.8 9.3 L18 9.3 M4.8 12.7 L18 12.7" stroke="#8f97b2" stroke-width="1.9" fill="none"/></svg>
<span id="t105" class="t" style="left:1998.60px;top:812.00px;font-size:17.8px;color:#000;font-weight:700;">8</span>
<svg class="b" style="left:2025.60px;top:805.40px;" width="22" height="22" viewBox="0 0 22 22">
<circle cx="10.9" cy="10.9" r="10.85" fill="#9aa3b5"/>
<path d="M10.9 0.6 C3.6 5.4 3.6 16.4 10.9 21.2 M10.9 0.6 C18.2 5.4 18.2 16.4 10.9 21.2" fill="none" stroke="#fff" stroke-opacity="0.8" stroke-width="1.25" />
<rect x="0.4" y="8.2" width="21" height="5.6" fill="#9aa3b5"/>
<text x="10.9" y="13.1" font-family='"Liberation Sans",sans-serif' font-size="7.6" font-weight="700" fill="#fff" stroke="#fff" stroke-width="0.12" text-anchor="middle" textLength="19.8" lengthAdjust="spacingAndGlyphs">www</text></svg>
<span id="t106" class="t" style="left:2053.40px;top:812.00px;font-size:17.8px;color:#000;font-weight:700;">1</span>
<svg class="b" style="left:2079.40px;top:810.20px;" width="25" height="22" viewBox="0 0 25 22">
<g fill="none" stroke="#9aa3b5" stroke-width="2.2" stroke-linejoin="round">
<path d="M12.4 16.9 L2.3 16.9 Q1.1 16.9 1.1 15.7 L1.1 2.3 Q1.1 1.1 2.3 1.1 L20.3 1.1 Q21.5 1.1 21.5 2.3 L21.5 9.9"/>
<path d="M1.8 2.4 L11.3 9.3 L20.8 2.4" stroke-width="2"/>
<path d="M14.8 16.9 L19.6 16.9"/>
</g><path d="M19 12.6 L23.2 16.8 L19 21 Z" fill="#9aa3b5"/></svg>
<span id="t107" class="t" style="left:2109.20px;top:812.00px;font-size:17.8px;color:#000;font-weight:700;">4</span>
<div class="b" style="left:460.10px;top:887.70px;width:23.80px;height:23.60px;background:#ffffff;border-radius:6px;border:2.2px solid #8b94a8;box-sizing:border-box;"></div>
<span id="t108" class="t" style="left:501.90px;top:881.00px;font-size:16px;color:#1f2b4d;font-weight:700;transform:scaleX(0.9386);">Emily Taylor</span>
<span id="t109" class="t" style="left:501.90px;top:907.00px;font-size:12.8px;color:#2e3b5c;transform:scaleX(0.9516);">emily.taylor@businesshub.com</span>
<span id="t110" class="t" style="left:799.60px;top:890.00px;font-size:16px;color:#9fa6b7;transform:scaleX(1.0120);">Contact</span>
<span id="t111" class="t" style="left:1063.80px;top:880.00px;font-size:16px;color:#1f2b4d;font-weight:700;transform:scaleX(0.9595);">Simplify Your Marketing Processes</span>
<span id="t112" class="t" style="left:1063.80px;top:905.00px;font-size:16px;color:#9fa6b7;transform:scaleX(1.0124);">Thanks for reaching out. I’m not the right person to discuss this, but...</span>
<span id="t113" class="t" style="left:1686.40px;top:882.00px;font-size:13px;color:#2e3b5c;-webkit-text-stroke:0.45px #2e3b5c;transform:scaleX(0.9254);">26 Nov, 2024, 10:05 AM</span>
<span id="t114" class="t" style="left:1687.70px;top:906.00px;font-size:12.8px;color:#2e3b5c;transform:scaleX(0.9498);">demosender@gmail.com</span>
<svg class="b" style="left:1970.00px;top:888.70px;" width="24" height="23" viewBox="0 0 24 23">
<path d="M2.4 1.5 L21.7 1.5 L21.7 21 L17.6 17.1 L2.4 17.1 Q1.3 17.1 1.3 16 L1.3 2.6 Q1.3 1.5 2.4 1.5 Z" fill="none" stroke="#9aa3b5" stroke-width="2.2" stroke-linejoin="round"/>
<path d="M17.8 17 L21.8 20.8 L21.8 17 Z" fill="#9aa3b5"/>
<path d="M4.8 5.7 L18 5.7 M4.8 9.3 L18 9.3 M4.8 12.7 L18 12.7" stroke="#8f97b2" stroke-width="1.9" fill="none"/></svg>
<span id="t115" class="t" style="left:1998.60px;top:892.00px;font-size:17.8px;color:#000;font-weight:700;">8</span>
<svg class="b" style="left:2025.60px;top:885.60px;" width="22" height="22" viewBox="0 0 22 22">
<circle cx="10.9" cy="10.9" r="10.85" fill="#9aa3b5"/>
<path d="M10.9 0.6 C3.6 5.4 3.6 16.4 10.9 21.2 M10.9 0.6 C18.2 5.4 18.2 16.4 10.9 21.2" fill="none" stroke="#fff" stroke-opacity="0.8" stroke-width="1.25" />
<rect x="0.4" y="8.2" width="21" height="5.6" fill="#9aa3b5"/>
<text x="10.9" y="13.1" font-family='"Liberation Sans",sans-serif' font-size="7.6" font-weight="700" fill="#fff" stroke="#fff" stroke-width="0.12" text-anchor="middle" textLength="19.8" lengthAdjust="spacingAndGlyphs">www</text></svg>
<span id="t116" class="t" style="left:2053.40px;top:892.00px;font-size:17.8px;color:#000;font-weight:700;">1</span>
<svg class="b" style="left:2079.40px;top:890.40px;" width="25" height="22" viewBox="0 0 25 22">
<g fill="none" stroke="#9aa3b5" stroke-width="2.2" stroke-linejoin="round">
<path d="M12.4 16.9 L2.3 16.9 Q1.1 16.9 1.1 15.7 L1.1 2.3 Q1.1 1.1 2.3 1.1 L20.3 1.1 Q21.5 1.1 21.5 2.3 L21.5 9.9"/>
<path d="M1.8 2.4 L11.3 9.3 L20.8 2.4" stroke-width="2"/>
<path d="M14.8 16.9 L19.6 16.9"/>
</g><path d="M19 12.6 L23.2 16.8 L19 21 Z" fill="#9aa3b5"/></svg>
<span id="t117" class="t" style="left:2109.20px;top:892.00px;font-size:17.8px;color:#000;font-weight:700;">4</span>
<div class="b" style="left:460.10px;top:968.70px;width:23.80px;height:23.60px;background:#ffffff;border-radius:6px;border:2.2px solid #8b94a8;box-sizing:border-box;"></div>
<span id="t118" class="t" style="left:501.90px;top:962.00px;font-size:16px;color:#1f2b4d;font-weight:700;transform:scaleX(0.9536);">Ryan Miller</span>
<span id="t119" class="t" style="left:501.90px;top:988.00px;font-size:12.8px;color:#2e3b5c;transform:scaleX(0.9465);">ryan.miller@innovatech.com</span>
<span id="t120" class="t" style="left:799.60px;top:973.00px;font-size:16px;color:#9fa6b7;transform:scaleX(1.0120);">Prospect</span>
<span id="t121" class="t" style="left:1063.80px;top:961.00px;font-size:16px;color:#1f2b4d;font-weight:700;transform:scaleX(0.9458);">Can We Help You Achieve 2X Results?</span>
<span id="t122" class="t" style="left:1063.80px;top:986.00px;font-size:16px;color:#9fa6b7;transform:scaleX(1.0005);">Your tool looks interesting. However, we have very specific needs reg...</span>
<span id="t123" class="t" style="left:1686.40px;top:963.00px;font-size:13px;color:#2e3b5c;-webkit-text-stroke:0.45px #2e3b5c;transform:scaleX(0.9196);">25 Nov, 2024, 3:00 PM</span>
<span id="t124" class="t" style="left:1687.70px;top:987.00px;font-size:12.8px;color:#2e3b5c;transform:scaleX(0.9498);">demosender@gmail.com</span>
<svg class="b" style="left:1970.00px;top:969.70px;" width="24" height="23" viewBox="0 0 24 23">
<path d="M2.4 1.5 L21.7 1.5 L21.7 21 L17.6 17.1 L2.4 17.1 Q1.3 17.1 1.3 16 L1.3 2.6 Q1.3 1.5 2.4 1.5 Z" fill="none" stroke="#9aa3b5" stroke-width="2.2" stroke-linejoin="round"/>
<path d="M17.8 17 L21.8 20.8 L21.8 17 Z" fill="#9aa3b5"/>
<path d="M4.8 5.7 L18 5.7 M4.8 9.3 L18 9.3 M4.8 12.7 L18 12.7" stroke="#8f97b2" stroke-width="1.9" fill="none"/></svg>
<span id="t125" class="t" style="left:1998.60px;top:973.00px;font-size:17.8px;color:#000;font-weight:700;">8</span>
<svg class="b" style="left:2025.60px;top:966.60px;" width="22" height="22" viewBox="0 0 22 22">
<circle cx="10.9" cy="10.9" r="10.85" fill="#9aa3b5"/>
<path d="M10.9 0.6 C3.6 5.4 3.6 16.4 10.9 21.2 M10.9 0.6 C18.2 5.4 18.2 16.4 10.9 21.2" fill="none" stroke="#fff" stroke-opacity="0.8" stroke-width="1.25" />
<rect x="0.4" y="8.2" width="21" height="5.6" fill="#9aa3b5"/>
<text x="10.9" y="13.1" font-family='"Liberation Sans",sans-serif' font-size="7.6" font-weight="700" fill="#fff" stroke="#fff" stroke-width="0.12" text-anchor="middle" textLength="19.8" lengthAdjust="spacingAndGlyphs">www</text></svg>
<span id="t126" class="t" style="left:2053.40px;top:973.00px;font-size:17.8px;color:#000;font-weight:700;">1</span>
<svg class="b" style="left:2079.40px;top:971.40px;" width="25" height="22" viewBox="0 0 25 22">
<g fill="none" stroke="#9aa3b5" stroke-width="2.2" stroke-linejoin="round">
<path d="M12.4 16.9 L2.3 16.9 Q1.1 16.9 1.1 15.7 L1.1 2.3 Q1.1 1.1 2.3 1.1 L20.3 1.1 Q21.5 1.1 21.5 2.3 L21.5 9.9"/>
<path d="M1.8 2.4 L11.3 9.3 L20.8 2.4" stroke-width="2"/>
<path d="M14.8 16.9 L19.6 16.9"/>
</g><path d="M19 12.6 L23.2 16.8 L19 21 Z" fill="#9aa3b5"/></svg>
<span id="t127" class="t" style="left:2109.20px;top:973.00px;font-size:17.8px;color:#000;font-weight:700;">4</span>
<div class="b" style="left:460.10px;top:1049.70px;width:23.80px;height:23.60px;background:#ffffff;border-radius:6px;border:2.2px solid #8b94a8;box-sizing:border-box;"></div>
<span id="t128" class="t" style="left:501.90px;top:1043.00px;font-size:16px;color:#1f2b4d;font-weight:700;transform:scaleX(0.9325);">Laura Green</span>
<span id="t129" class="t" style="left:501.90px;top:1069.00px;font-size:12.8px;color:#2e3b5c;transform:scaleX(0.9410);">laura.green@enterpriseabc.com</span>
<span id="t130" class="t" style="left:799.60px;top:1048.00px;font-size:16px;color:#9fa6b7;transform:scaleX(1.0120);">Contact</span>
<span id="t131" class="t" style="left:1063.80px;top:1042.00px;font-size:16px;color:#1f2b4d;font-weight:700;transform:scaleX(0.9590);">Streamline Your Marketing Today</span>
<span id="t132" class="t" style="left:1063.80px;top:1067.00px;font-size:16px;color:#9fa6b7;transform:scaleX(0.9998);">hank you for reaching out. While I appreciate your email, we’re satisfi...</span>
<span id="t133" class="t" style="left:1686.40px;top:1044.00px;font-size:13px;color:#2e3b5c;-webkit-text-stroke:0.45px #2e3b5c;transform:scaleX(0.9206);">25 Nov, 2024, 12:00 PM</span>
<span id="t134" class="t" style="left:1687.70px;top:1068.00px;font-size:12.8px;color:#2e3b5c;transform:scaleX(0.9498);">demosender@gmail.com</span>
<svg class="b" style="left:1970.00px;top:1050.70px;" width="24" height="23" viewBox="0 0 24 23">
<path d="M2.4 1.5 L21.7 1.5 L21.7 21 L17.6 17.1 L2.4 17.1 Q1.3 17.1 1.3 16 L1.3 2.6 Q1.3 1.5 2.4 1.5 Z" fill="none" stroke="#9aa3b5" stroke-width="2.2" stroke-linejoin="round"/>
<path d="M17.8 17 L21.8 20.8 L21.8 17 Z" fill="#9aa3b5"/>
<path d="M4.8 5.7 L18 5.7 M4.8 9.3 L18 9.3 M4.8 12.7 L18 12.7" stroke="#8f97b2" stroke-width="1.9" fill="none"/></svg>
<span id="t135" class="t" style="left:1998.60px;top:1054.00px;font-size:17.8px;color:#000;font-weight:700;">8</span>
<svg class="b" style="left:2025.60px;top:1047.60px;" width="22" height="22" viewBox="0 0 22 22">
<circle cx="10.9" cy="10.9" r="10.85" fill="#9aa3b5"/>
<path d="M10.9 0.6 C3.6 5.4 3.6 16.4 10.9 21.2 M10.9 0.6 C18.2 5.4 18.2 16.4 10.9 21.2" fill="none" stroke="#fff" stroke-opacity="0.8" stroke-width="1.25" />
<rect x="0.4" y="8.2" width="21" height="5.6" fill="#9aa3b5"/>
<text x="10.9" y="13.1" font-family='"Liberation Sans",sans-serif' font-size="7.6" font-weight="700" fill="#fff" stroke="#fff" stroke-width="0.12" text-anchor="middle" textLength="19.8" lengthAdjust="spacingAndGlyphs">www</text></svg>
<span id="t136" class="t" style="left:2053.40px;top:1054.00px;font-size:17.8px;color:#000;font-weight:700;">1</span>
<svg class="b" style="left:2079.40px;top:1052.40px;" width="25" height="22" viewBox="0 0 25 22">
<g fill="none" stroke="#9aa3b5" stroke-width="2.2" stroke-linejoin="round">
<path d="M12.4 16.9 L2.3 16.9 Q1.1 16.9 1.1 15.7 L1.1 2.3 Q1.1 1.1 2.3 1.1 L20.3 1.1 Q21.5 1.1 21.5 2.3 L21.5 9.9"/>
<path d="M1.8 2.4 L11.3 9.3 L20.8 2.4" stroke-width="2"/>
<path d="M14.8 16.9 L19.6 16.9"/>
</g><path d="M19 12.6 L23.2 16.8 L19 21 Z" fill="#9aa3b5"/></svg>
<span id="t137" class="t" style="left:2109.20px;top:1054.00px;font-size:17.8px;color:#000;font-weight:700;">4</span>
<div class="b" style="left:460.10px;top:1130.70px;width:23.80px;height:23.60px;background:#ffffff;border-radius:6px;border:2.2px solid #8b94a8;box-sizing:border-box;"></div>
<span id="t138" class="t" style="left:501.90px;top:1124.00px;font-size:16px;color:#1f2b4d;font-weight:700;transform:scaleX(0.9567);">William Clark</span>
<span id="t139" class="t" style="left:501.90px;top:1150.00px;font-size:12.8px;color:#2e3b5c;transform:scaleX(0.9658);">william.clark@startupbuilders.com</span>
<span id="t140" class="t" style="left:799.60px;top:1135.00px;font-size:16px;color:#9fa6b7;transform:scaleX(1.0120);">Contact</span>
<span id="t141" class="t" style="left:1063.80px;top:1123.00px;font-size:16px;color:#1f2b4d;font-weight:700;transform:scaleX(0.9424);">Affordable Tools to Boost ROI</span>
<span id="t142" class="t" style="left:1063.80px;top:1148.00px;font-size:16px;color:#9fa6b7;transform:scaleX(1.0083);">Your tool caught my attention. Can you share more about the pricing...</span>
<span id="t143" class="t" style="left:1686.40px;top:1125.00px;font-size:13px;color:#2e3b5c;-webkit-text-stroke:0.45px #2e3b5c;transform:scaleX(0.9319);">25 Nov, 2024, 11:45 AM</span>
<span id="t144" class="t" style="left:1687.70px;top:1149.00px;font-size:12.8px;color:#2e3b5c;transform:scaleX(0.9498);">demosender@gmail.com</span>
<svg class="b" style="left:1970.00px;top:1131.70px;" width="24" height="23" viewBox="0 0 24 23">
<path d="M2.4 1.5 L21.7 1.5 L21.7 21 L17.6 17.1 L2.4 17.1 Q1.3 17.1 1.3 16 L1.3 2.6 Q1.3 1.5 2.4 1.5 Z" fill="none" stroke="#9aa3b5" stroke-width="2.2" stroke-linejoin="round"/>
<path d="M17.8 17 L21.8 20.8 L21.8 17 Z" fill="#9aa3b5"/>
<path d="M4.8 5.7 L18 5.7 M4.8 9.3 L18 9.3 M4.8 12.7 L18 12.7" stroke="#8f97b2" stroke-width="1.9" fill="none"/></svg>
<span id="t145" class="t" style="left:1998.60px;top:1135.00px;font-size:17.8px;color:#000;font-weight:700;">8</span>
<svg class="b" style="left:2025.60px;top:1128.60px;" width="22" height="22" viewBox="0 0 22 22">
<circle cx="10.9" cy="10.9" r="10.85" fill="#9aa3b5"/>
<path d="M10.9 0.6 C3.6 5.4 3.6 16.4 10.9 21.2 M10.9 0.6 C18.2 5.4 18.2 16.4 10.9 21.2" fill="none" stroke="#fff" stroke-opacity="0.8" stroke-width="1.25" />
<rect x="0.4" y="8.2" width="21" height="5.6" fill="#9aa3b5"/>
<text x="10.9" y="13.1" font-family='"Liberation Sans",sans-serif' font-size="7.6" font-weight="700" fill="#fff" stroke="#fff" stroke-width="0.12" text-anchor="middle" textLength="19.8" lengthAdjust="spacingAndGlyphs">www</text></svg>
<span id="t146" class="t" style="left:2053.40px;top:1135.00px;font-size:17.8px;color:#000;font-weight:700;">1</span>
<svg class="b" style="left:2079.40px;top:1133.40px;" width="25" height="22" viewBox="0 0 25 22">
<g fill="none" stroke="#9aa3b5" stroke-width="2.2" stroke-linejoin="round">
<path d="M12.4 16.9 L2.3 16.9 Q1.1 16.9 1.1 15.7 L1.1 2.3 Q1.1 1.1 2.3 1.1 L20.3 1.1 Q21.5 1.1 21.5 2.3 L21.5 9.9"/>
<path d="M1.8 2.4 L11.3 9.3 L20.8 2.4" stroke-width="2"/>
<path d="M14.8 16.9 L19.6 16.9"/>
</g><path d="M19 12.6 L23.2 16.8 L19 21 Z" fill="#9aa3b5"/></svg>
<span id="t147" class="t" style="left:2109.20px;top:1135.00px;font-size:17.8px;color:#000;font-weight:700;">4</span>
<div class="b" style="left:432.70px;top:288.00px;width:1730.70px;height:1.60px;background:#cdd3e3;"></div>
<div class="b" style="left:432.70px;top:370.05px;width:1730.70px;height:1.50px;background:#d3d8e6;"></div>
<div class="b" style="left:432.70px;top:452.55px;width:1730.70px;height:1.50px;background:#d3d8e6;"></div>
<div class="b" style="left:432.70px;top:533.05px;width:1730.70px;height:1.50px;background:#d3d8e6;"></div>
<div class="b" style="left:432.70px;top:694.75px;width:1730.70px;height:1.50px;background:#d3d8e6;"></div>
<div class="b" style="left:432.70px;top:777.35px;width:1730.70px;height:1.50px;background:#d3d8e6;"></div>
<div class="b" style="left:432.70px;top:857.55px;width:1730.70px;height:1.50px;background:#d3d8e6;"></div>
<div class="b" style="left:432.70px;top:938.55px;width:1730.70px;height:1.50px;background:#d3d8e6;"></div>
<div class="b" style="left:432.70px;top:1019.55px;width:1730.70px;height:1.50px;background:#d3d8e6;"></div>
<div class="b" style="left:432.70px;top:1100.55px;width:1730.70px;height:1.50px;background:#d3d8e6;"></div>
</div>
<div class="b" style="left:32.00px;top:0.00px;width:2160.00px;height:1214.00px;border-radius:11px 11px 13px 13px;border:1.8px solid #c4c6d6;box-sizing:border-box;border-top-width:2px;border-top-color:#d0d2dc;"></div>
</body></html>
